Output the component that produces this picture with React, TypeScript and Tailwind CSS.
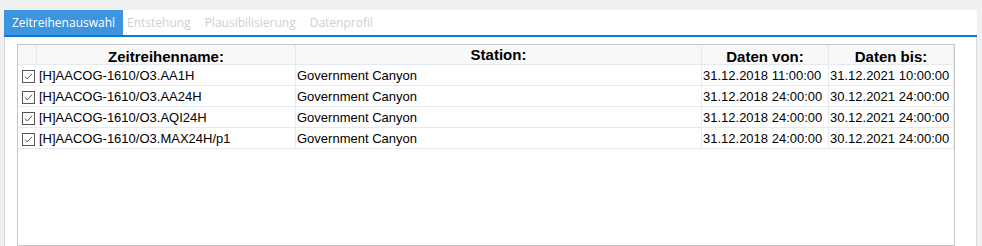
const rows = [
  { name: "[H]AACOG-1610/O3.AA1H", station: "Government Canyon", from: "31.12.2018 11:00:00", to: "31.12.2021 10:00:00" },
  { name: "[H]AACOG-1610/O3.AA24H", station: "Government Canyon", from: "31.12.2018 24:00:00", to: "30.12.2021 24:00:00" },
  { name: "[H]AACOG-1610/O3.AQI24H", station: "Government Canyon", from: "31.12.2018 24:00:00", to: "30.12.2021 24:00:00" },
  { name: "[H]AACOG-1610/O3.MAX24H/p1", station: "Government Canyon", from: "31.12.2018 24:00:00", to: "30.12.2021 24:00:00" },
];

function CheckBox() {
  return (
    <svg width="13" height="13" viewBox="0 0 13 13" className="shrink-0">
      <rect x="0.5" y="0.5" width="12" height="12" fill="#fff" stroke="#555" />
      <path d="M3 6.5 L5.3 9 L10 3.8" fill="none" stroke="#555" strokeWidth="1" />
    </svg>
  );
}

export default function App() {
  return (
    <div className="flex h-[246px] w-[982px] flex-col overflow-hidden bg-[#f0f0f0] pt-[10px] pl-[4px] pr-[5px] font-['Liberation_Sans',Arial,sans-serif] text-[13px] text-black">
      {/* tab strip */}
      <div className="flex h-[25px] shrink-0 items-stretch bg-white font-['Open_Sans',sans-serif] text-[12px] leading-[25px]">
        <div className="w-[119px] bg-[#3c95de] text-center text-white">Zeitreihenauswahl</div>
        <div className="flex gap-[14px] pl-[4px] text-[#cfcfcf]">
          <span>Entstehung</span>
          <span>Plausibilisierung</span>
          <span>Datenprofil</span>
        </div>
      </div>
      <div className="h-[2px] shrink-0 bg-[#0a78d6]" />

      {/* panel body */}
      <div className="flex flex-1 flex-col border-x border-[#d9d9d9] bg-white pt-[7px] pl-[12px]">
        <div className="w-[938px] flex-1 border border-[#c6c6c6]">
          {/* header */}
          <div className="flex h-[20px] border-b border-[#e2eaf4] bg-[#f8f8f8] text-[15px] font-bold leading-[17px]">
            <div className="w-[19px] border-r border-[#e2eaf4]" />
            <div className="w-[259px] border-r border-[#e2eaf4] pt-[3px] text-center">Zeitreihenname:</div>
            <div className="w-[406px] pt-[1px] text-center border-r border-[#e2eaf4]">Station:</div>
            <div className="w-[127px] border-r border-[#e2eaf4] pt-[3px] text-center">Daten von:</div>
            <div className="w-[125px] border-r border-[#e2eaf4] pt-[3px] text-center">Daten bis:</div>
          </div>

          {rows.map((r) => (
            <div key={r.name} className="flex h-[21px] border-b border-[#e2eaf4] leading-[15px]">
              <div className="flex w-[278px] items-start gap-[4px] border-r border-[#e2eaf4] pt-[5px] pl-[4px]">
                <CheckBox />
                <span className="-mt-[2px]">{r.name}</span>
              </div>
              <div className="w-[406px] border-r border-[#e2eaf4] pt-[3px] pl-[1px]">{r.station}</div>
              <div className="w-[127px] border-r border-[#e2eaf4] pt-[3px] pl-[1px]">{r.from}</div>
              <div className="w-[125px] border-r border-[#e2eaf4] pt-[3px] pl-[1px]">{r.to}</div>
            </div>
          ))}
        </div>
      </div>
    </div>
  );
}
